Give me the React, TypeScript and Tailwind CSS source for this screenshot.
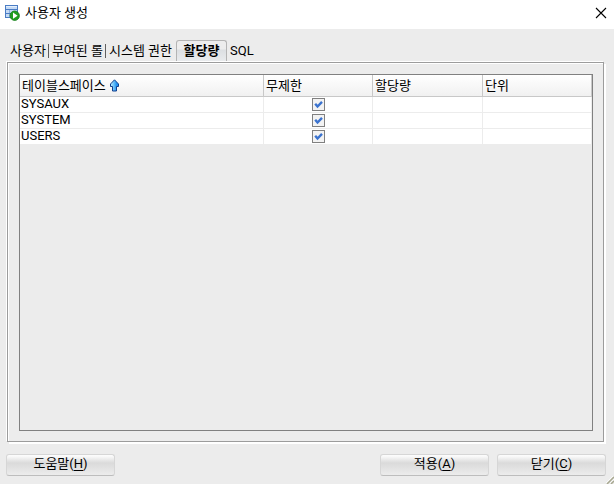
const tabs = ["사용자", "부여된 롤", "시스템 권한", "할당량", "SQL"];
const activeTab = "할당량";

const tablespaces = [
  { name: "SYSAUX", unlimited: true },
  { name: "SYSTEM", unlimited: true },
  { name: "USERS", unlimited: true },
];

function AppIcon() {
  return (
    <svg width="16" height="16" viewBox="0 0 16 16" aria-hidden="true">
      <rect x="1.5" y="0.5" width="12" height="12" fill="#c4daf5" stroke="#4a7cc4" />
      <path d="M2 4.5h11M2 8.5h11" stroke="#4a7cc4" fill="none" />
      <path d="M5.5 5v3M5.5 9v3" stroke="#8fb2e2" fill="none" />
      <path d="M2 1.5h11" stroke="#e4effc" />
      <circle cx="10.7" cy="10.7" r="4.7" fill="#1f9e1f" stroke="#0d7a12" strokeWidth="0.8" />
      <path d="M9 7.6v6.2l4.6-3.1z" fill="#fff" />
    </svg>
  );
}

function SortArrow() {
  return (
    <svg width="9" height="13" viewBox="0 0 9 13" aria-hidden="true">
      <defs>
        <linearGradient id="arrow" x1="0" x2="1">
          <stop offset="0.1" stopColor="#a8e6ff" />
          <stop offset="0.8" stopColor="#1b8ff0" />
        </linearGradient>
      </defs>
      <path d="M4.5 0.8L8.5 5V7.5H6.5V12H2.5V7.5H0.5V5z" fill="url(#arrow)" stroke="#123f8d" />
    </svg>
  );
}

function QuotaCheckbox({ label, checked }: { label: string; checked: boolean }) {
  return (
    <label className="mx-auto grid size-[13px] place-items-center">
      <input
        type="checkbox"
        defaultChecked={checked}
        aria-label={label}
        className="peer col-start-1 row-start-1 size-[13px] appearance-none border border-[#808080] bg-[#f3f3f3]"
      />
      <svg
        width="9"
        height="9"
        viewBox="0 0 9 9"
        aria-hidden="true"
        className="pointer-events-none invisible col-start-1 row-start-1 peer-checked:visible"
      >
        <path d="M1.2 3.8L3.5 6.5L8 1.8" fill="none" stroke="#3b73cf" strokeWidth="2.4" />
      </svg>
    </label>
  );
}

function DialogButton({ label, mnemonic }: { label: string; mnemonic: string }) {
  return (
    <button
      type="button"
      className="h-[22px] w-[109px] rounded-[3px] border border-[#d6d6d6] border-b-[#bdbdbd] bg-linear-to-b from-[#fbfbfb] from-5% via-[#dadada] via-40% to-[#ececec] pb-[3px]"
    >
      {label}(<u className="underline-offset-2">{mnemonic}</u>)
    </button>
  );
}

export default function App() {
  return (
    <div className="flex min-h-screen flex-col bg-[#ececec] font-['Roboto','Noto_Sans_CJK_KR',sans-serif] text-[13px] leading-4 text-black">
      {/* Title bar */}
      <header className="flex h-[29px] items-center bg-white pr-[7px] pb-[3px] pl-1">
        <AppIcon />
        <h1 className="ml-[5px] flex-1">사용자 생성</h1>
        <button type="button" aria-label="창 닫기">
          <svg width="12" height="12" viewBox="0 0 12 12" aria-hidden="true">
            <path d="M1 1L11 11M11 1L1 11" stroke="#000" strokeWidth="1.1" />
          </svg>
        </button>
      </header>

      <main className="flex flex-1 flex-col pt-[11px] pr-[10px] pl-[7px]">
        {/* Tabs */}
        <div role="tablist" className="flex h-[22px]">
          {tabs.map((tab, index) =>
            tab === activeTab ? (
              <button
                key={tab}
                type="button"
                role="tab"
                aria-selected="true"
                className="ml-1 h-[21px] w-[51px] rounded-t-[3px] border border-b-0 border-[#b4b4b4] bg-linear-to-b from-[#ededed] from-40% via-[#dcdfe2] via-45% to-[#e9ebed] font-bold"
              >
                {tab}
              </button>
            ) : (
              <button
                key={tab}
                type="button"
                role="tab"
                aria-selected="false"
                className="flex h-[22px] items-center gap-[2px] pl-[3px]"
              >
                {tab}
                {index < 2 && <span className="h-[14px] w-px bg-[#606060]" />}
              </button>
            ),
          )}
        </div>

        {/* Tab panel */}
        <section
          role="tabpanel"
          className="flex flex-1 flex-col border border-[#9c9c9c] pt-[11px] pr-[10px] pb-[10px] pl-[11px] shadow-[-1px_-1px_0_#fff,2px_2px_0_#fff,inset_1px_1px_0_#fff]"
        >
          <div className="flex-1 border border-[#808080]">
            <table className="w-full table-fixed border-separate border-spacing-0">
              <colgroup>
                <col />
                <col className="w-[109px]" />
                <col className="w-[110px]" />
                <col className="w-[109px]" />
              </colgroup>
              <thead>
                <tr className="h-[22px] bg-linear-to-b from-white to-[#f0f0f0] text-left *:border-r *:border-b *:border-[#c8c8c8] *:p-0 *:pl-[2px] *:font-normal">
                  <th>
                    <span className="flex items-center gap-1">
                      테이블스페이스
                      <SortArrow />
                    </span>
                  </th>
                  <th>무제한</th>
                  <th>할당량</th>
                  <th>단위</th>
                </tr>
              </thead>
              <tbody>
                {tablespaces.map((row) => (
                  <tr
                    key={row.name}
                    className="h-4 bg-white *:h-4 *:border-r *:border-b *:border-[#ececec] *:p-0"
                  >
                    <td className="align-top leading-[14px]">
                      <span className="ml-px">{row.name}</span>
                    </td>
                    <td>
                      <QuotaCheckbox label={row.name + " 무제한"} checked={row.unlimited} />
                    </td>
                    <td />
                    <td />
                  </tr>
                ))}
              </tbody>
            </table>
          </div>
        </section>
      </main>

      {/* Footer */}
      <footer className="flex items-start gap-2 pt-3 pr-2 pb-2 pl-[6px]">
        <DialogButton label="도움말" mnemonic="H" />
        <div className="flex-1" />
        <DialogButton label="적용" mnemonic="A" />
        <DialogButton label="닫기" mnemonic="C" />
      </footer>

      {/* Resize grip */}
      <svg width="8" height="8" viewBox="0 0 8 8" aria-hidden="true" className="fixed right-0 bottom-0">
        <path d="M1 8L8 1M5 8L8 5" stroke="#a8a890" strokeWidth="1.5" />
        <path d="M0 7L7 0M4 7L8 3" stroke="#fff" strokeWidth="0.8" />
      </svg>
    </div>
  );
}
